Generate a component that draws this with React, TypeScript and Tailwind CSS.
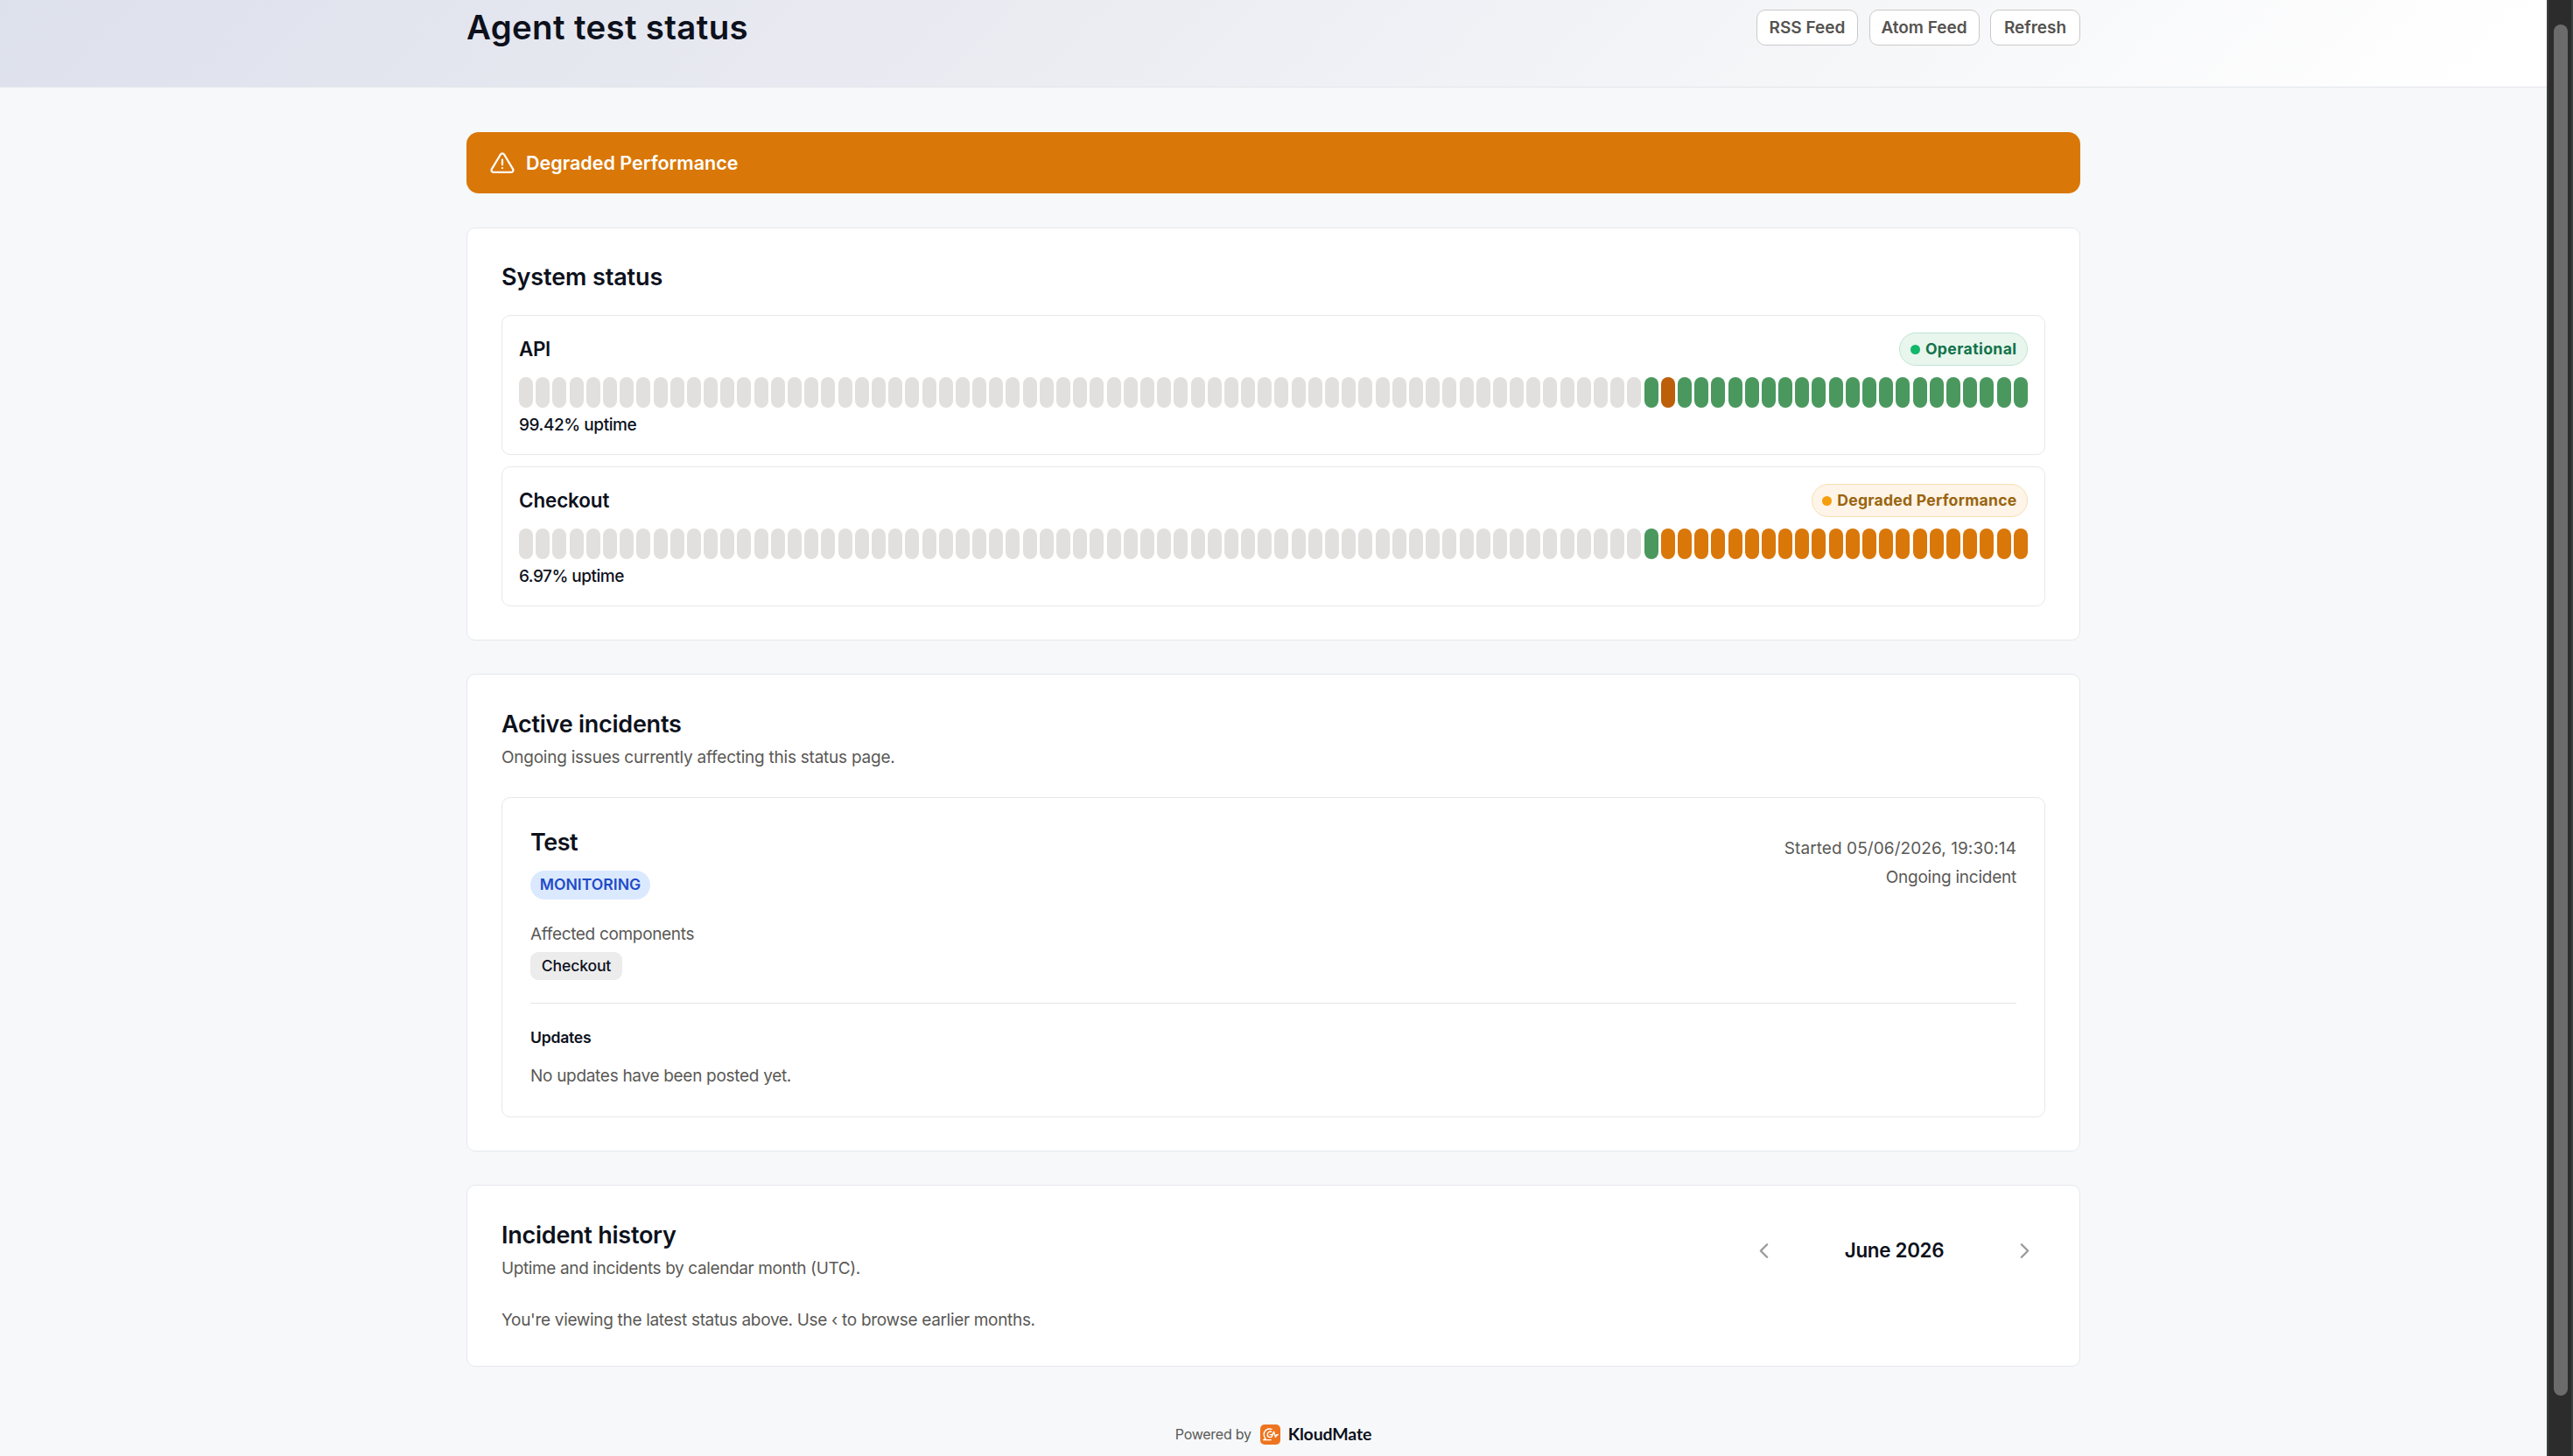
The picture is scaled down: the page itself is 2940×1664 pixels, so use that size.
import { ChevronLeft, ChevronRight } from "lucide-react";
import clsx from "clsx";

type DayStatus = "none" | "up" | "degraded" | "partial";

const days = (count: number, status: DayStatus): DayStatus[] =>
  Array.from({ length: count }, () => status);

const services = [
  {
    name: "API",
    nameClass: "tracking-[-0.4px]",
    uptime: "99.42% uptime",
    uptimeClass: "tracking-[-0.42px]",
    label: "Operational",
    badge: "border-[#bfe5d2] bg-[#e8f6ee] text-[#12734a] tracking-[0.4px]",
    dot: "bg-[#12b76a]",
    days: [...days(67, "none"), ...days(1, "up"), ...days(1, "partial"), ...days(21, "up")],
  },
  {
    name: "Checkout",
    nameClass: "tracking-[-0.1px]",
    uptime: "6.97% uptime",
    uptimeClass: "tracking-[-0.5px]",
    label: "Degraded Performance",
    badge: "border-[#f7dfb4] bg-[#fef4e7] text-[#99650f] tracking-[0.25px]",
    dot: "bg-[#f59e0b]",
    days: [...days(67, "none"), ...days(1, "up"), ...days(22, "degraded")],
  },
];

const dayColors: Record<DayStatus, string> = {
  none: "bg-[#e1e0df]",
  up: "bg-[#4b985f]",
  degraded: "bg-[#d97708]",
  partial: "bg-[#bc5f08]",
};

const headerActions = [
  { label: "RSS Feed", className: "w-[116px]" },
  { label: "Atom Feed", className: "w-[126px]" },
  { label: "Refresh", className: "w-[103px]" },
];

const AlertIcon = () => (
  <svg
    viewBox="0 0 24 24"
    fill="none"
    stroke="currentColor"
    strokeWidth="1.8"
    strokeLinecap="round"
    strokeLinejoin="round"
    className="mt-[2px] size-[30px]"
  >
    <path d="M10.363 3.591l-8.106 13.534a1.914 1.914 0 0 0 1.636 2.871h16.214a1.914 1.914 0 0 0 1.636-2.87l-8.106-13.536a1.914 1.914 0 0 0-3.274 0z" />
    <path d="M12 8.5v4.5" />
    <path d="M12 16h.01" />
  </svg>
);

const KloudMateLogo = () => (
  <svg viewBox="0 0 23 23" fill="none" className="size-[23px]">
    <rect width="23" height="23" rx="5" fill="#ee7420" />
    <g stroke="#fff" strokeWidth="1.4" strokeLinecap="round" strokeLinejoin="round">
      <path d="M13 5.4C8.4 3.8 4.2 7 4.2 11.2c0 2 .7 3.6 1.9 4.8L3.7 17.6H12.3" />
      <path d="M12.6 8.2C10.4 7.6 8.2 9.2 8.2 11.6c0 1.8 1.3 3 3.1 3 1.9 0 2.7-1.2 2.7-3h-2.8" />
      <path d="M14 11.6l1.5-3.400 2 6.200 1.300-2.700h1.500" />
    </g>
  </svg>
);

const cardClass = "rounded-[10px] border border-[#e6e8eb] bg-white px-[39px]";
const titleClass = "text-[27px] leading-[36px] font-semibold";
const mutedClass = "text-[19px] leading-[28px] text-[#5a5956]";

const Scrollbar = () => (
  <div className="w-[30px] shrink-0 border-x-2 border-[#3c3e3e] bg-[#2c2c2c] pt-[28px] pl-[6px]">
    <div className="h-[1567px] w-4 rounded-full bg-[#6b6b6b]" />
  </div>
);

export default function App() {
  return (
    <div className="flex h-[1664px] w-[2940px] overflow-hidden bg-[#f6f8fa] font-['Inter','Liberation_Sans',sans-serif] text-[#0d111c]">
      <div className="flex-1">
        <header className="h-[100px] border-b border-[#e3e6ea] bg-[linear-gradient(135deg,#dde1ec_0%,#e9eaf1_35%,#f3f4f7_65%,#ffffff_97%)] pt-[11px]">
          <div className="mx-auto flex h-[41px] w-[1844px] items-center justify-between">
            <h1 className="text-[38.4px] leading-[41px] font-semibold tracking-[0.35px]">
              Agent test status
            </h1>
            <div className="flex gap-[12.5px]">
              {headerActions.map((action) => (
                <button
                  key={action.label}
                  className={clsx(
                    "h-[41px] rounded-[10px] border border-[#c9c9c8] bg-white pt-px text-center text-[19px] font-[570] whitespace-nowrap text-[#555350]",
                    action.className
                  )}
                >
                  {action.label}
                </button>
              ))}
            </div>
          </div>
        </header>

        <main className="mx-auto w-[1844px] pt-[51px]">
          <div className="flex h-[70px] items-center gap-[12px] rounded-[14px] bg-[#d97708] pl-[26px] text-white">
            <AlertIcon />
            <p className="text-[21.5px] font-semibold">Degraded Performance</p>
          </div>

          <section className={clsx(cardClass, "mt-[39px] pt-[38px] pb-[38px]")}>
            <h2 className={clsx(titleClass, "tracking-[-0.1px]")}>System status</h2>
            <div className="mt-[25px] flex flex-col gap-[13px]">
              {services.map((service) => (
                <div
                  key={service.name}
                  className="h-[160px] rounded-[10px] border border-[#e6e8eb] px-[19px] pt-[19px]"
                >
                  <div className="flex h-[38px] items-center justify-between">
                    <h3 className={clsx("text-[22.4px] font-semibold", service.nameClass)}>
                      {service.name}
                    </h3>
                    <span
                      className={clsx(
                        "flex h-[38px] items-center gap-[6px] rounded-full border px-[11.5px] text-[17.6px] font-bold",
                        service.badge
                      )}
                    >
                      <span className={clsx("size-[11px] rounded-full", service.dot)} />
                      {service.label}
                    </span>
                  </div>
                  <div className="mt-[13px] flex h-[35px] gap-[3.2px]">
                    {service.days.map((status, i) => (
                      <span key={i} className={clsx("flex-1 rounded-full", dayColors[status])} />
                    ))}
                  </div>
                  <p
                    className={clsx(
                      "mt-[6px] text-[19px] leading-[28px] font-medium",
                      service.uptimeClass
                    )}
                  >
                    {service.uptime}
                  </p>
                </div>
              ))}
            </div>
          </section>

          <section className={clsx(cardClass, "mt-[38px] pt-[39px] pb-[38px]")}>
            <h2 className={clsx(titleClass, "tracking-[-0.25px]")}>Active incidents</h2>
            <p className={clsx(mutedClass, "mt-[6px] tracking-[-0.24px]")}>
              Ongoing issues currently affecting this status page.
            </p>
            <div className="mt-[31px] rounded-[10px] border border-[#e6e8eb] px-[32px] pt-[33px] pb-[32px]">
              <div className="flex justify-between">
                <div>
                  <h3 className={clsx(titleClass, "tracking-[-0.5px]")}>Test</h3>
                  <span className="mt-[14px] flex h-[33px] w-[137px] items-center justify-center rounded-full bg-[#dbe9fe] text-[17.6px] font-semibold text-[#1f4bc9]">
                    MONITORING
                  </span>
                </div>
                <div className="pt-[8px] text-right text-[19px] leading-[33px] text-[#5a5956]">
                  <p className="tracking-[0.08px]">Started 05/06/2026, 19:30:14</p>
                  <p className="tracking-[-0.24px]">Ongoing incident</p>
                </div>
              </div>
              <p className={clsx(mutedClass, "mt-[26px] tracking-[-0.33px]")}>
                Affected components
              </p>
              <span className="mt-[6px] flex h-[32px] w-[105px] items-center justify-center rounded-[9px] bg-[#ececec] text-[17.6px] font-medium tracking-[-0.15px]">
                Checkout
              </span>
              <div className="mt-[26px] border-t border-[#e4e5e7] pt-[25px]">
                <h4 className="text-[17.6px] leading-[28px] font-semibold tracking-[-0.25px]">
                  Updates
                </h4>
                <p className={clsx(mutedClass, "mt-[16px] tracking-[-0.3px]")}>
                  No updates have been posted yet.
                </p>
              </div>
            </div>
          </section>

          <section className={clsx(cardClass, "mt-[38px] pt-[39px] pb-[38px]")}>
            <div className="flex items-center justify-between">
              <div>
                <h2 className={clsx(titleClass, "tracking-[-0.25px]")}>Incident history</h2>
                <p className={clsx(mutedClass, "mt-[6px] tracking-[-0.38px]")}>
                  Uptime and incidents by calendar month (UTC).
                </p>
              </div>
              <div className="flex items-center">
                <button className="flex size-12 items-center justify-center text-[#9b9a98]">
                  <ChevronLeft className="size-[29px]" strokeWidth={2} />
                </button>
                <span className="w-[250px] pl-px text-center text-[22.4px] font-semibold tracking-[-0.3px]">
                  June 2026
                </span>
                <button className="flex size-12 items-center justify-center text-[#9b9a98]">
                  <ChevronRight className="size-[29px]" strokeWidth={2} />
                </button>
              </div>
            </div>
            <p className={clsx(mutedClass, "mt-[31px] tracking-[-0.32px]")}>
              You&apos;re viewing the latest status above. Use ‹ to browse earlier months.
            </p>
          </section>

          <footer className="mt-[65px] flex h-6 items-center justify-center">
            <span className="text-[16px] tracking-[-0.25px] text-[#5a5956]">Powered by</span>
            <span className="mr-[9px] ml-[10px]">
              <KloudMateLogo />
            </span>
            <span className="font-['Lato',sans-serif] text-[19.5px] font-bold tracking-[-0.15px]">
              KloudMate
            </span>
          </footer>
        </main>
      </div>
      <Scrollbar />
    </div>
  );
}
